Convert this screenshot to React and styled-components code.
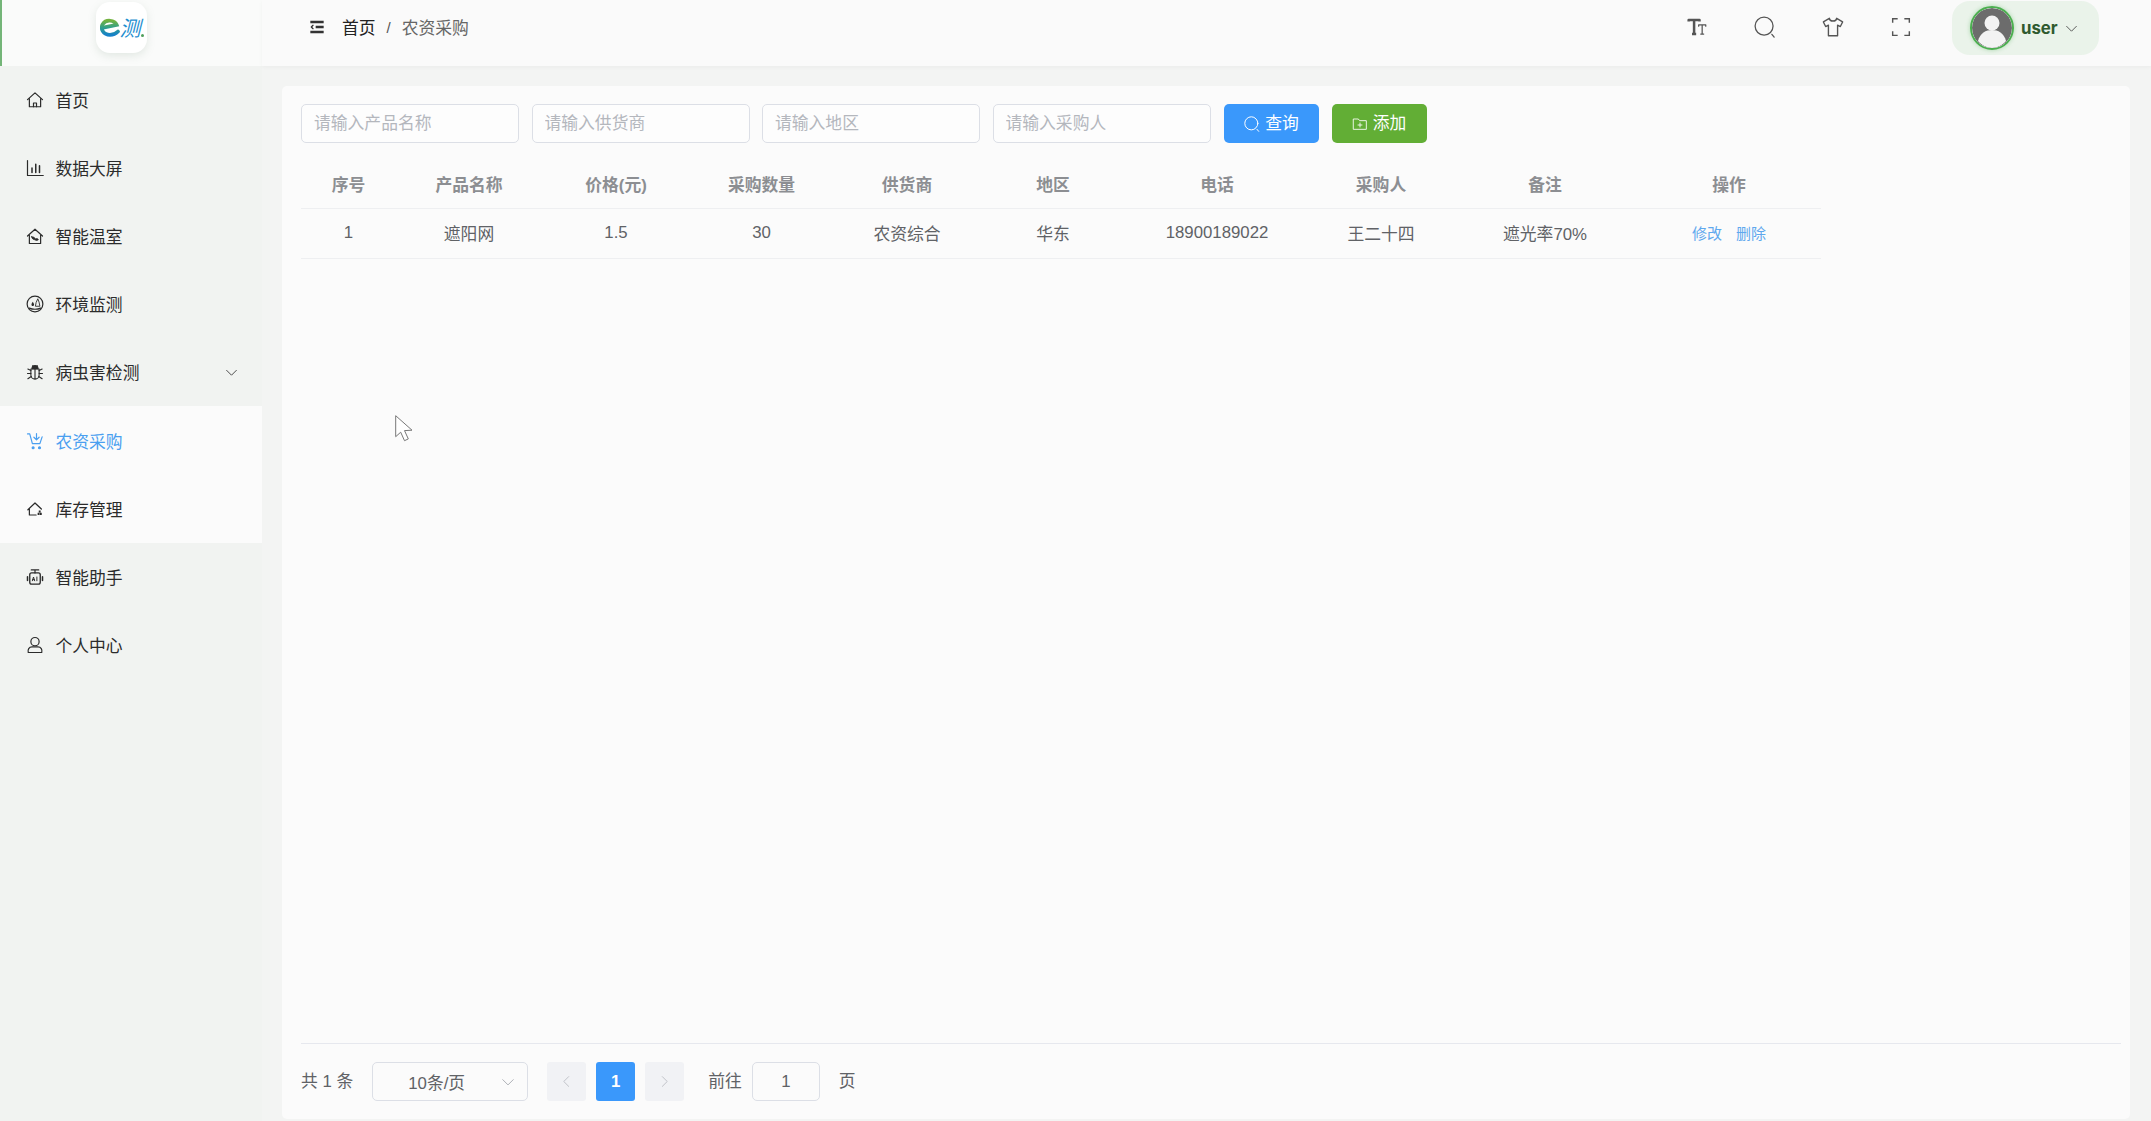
import React from 'react';
import styled, { createGlobalStyle } from 'styled-components';

const FONT = '"Liberation Sans", "Noto Sans CJK SC", sans-serif';

const GlobalStyle = createGlobalStyle`
  html, body {
    margin: 0;
    padding: 0;
    height: 100%;
    background: #f3f4f3;
    font-family: ${FONT};
    overflow: hidden;
  }
  #root { height: 100%; }
  * { box-sizing: border-box; }
`;

// icons, all drawn on a 24 box
const Svg = ({ size = 18, children, color = 'currentColor', width = 1.6 }) => (
  <svg width={size} height={size} viewBox="0 0 24 24" fill="none" stroke={color} strokeWidth={width} strokeLinecap="round" strokeLinejoin="round">
    {children}
  </svg>
);

const HomeIcon = () => (
  <Svg>
    <path d="M2 11.5 12 2.5l10 9M4.5 10v11h15V10" />
    <path d="M10 21v-5h4v5" />
  </Svg>
);
const ChartIcon = () => (
  <Svg>
    <path d="M2 2v20h21" />
    <path d="M8 12v6M13 7v11M18 9v9" strokeWidth="2" />
  </Svg>
);
const GreenhouseIcon = () => (
  <Svg>
    <path d="M2 12 12 3l10 9M4.500 10.500V22h15V10.500" />
    <path d="M7.500 13c3 0 4 1 5 3 2-1 3.500-.5 4 1-2 1.500-3.500 1-4.500 0-2 0-4-1-4.500-4z" fill="currentColor" strokeWidth="1" />
  </Svg>
);
const EnvIcon = () => (
  <Svg>
    <circle cx="12" cy="12" r="10.500" />
    <path d="M4.500 17.500c4 2 11 2 15 0" />
    <path d="M9 9c-1.500 2.500-2.500 4-1 5.500 1.500 1 3-.5 2.700-2.200-.2-1.100-1-2.200-1.700-3.300z" fill="currentColor" stroke="none" />
    <path d="M15.500 5.500 13.500 10l-1 5h6l-1-5z" stroke="currentColor" strokeWidth="1.200" />
  </Svg>
);
const BugIcon = () => (
  <Svg width="1.500">
    <path d="M8 7.500a4 4 0 0 1 8 0z" fill="currentColor" />
    <path d="M6.500 8h11v8a5.500 5.500 0 0 1-11 0zM12 8v13" />
    <path d="M9 3.500 10 5M15 3.500 14 5M2.500 8l4 2M21.500 8l-4 2M2 14h4.500M22 14h-4.500M2.500 21l4.500-3M21.500 21 17 18" />
  </Svg>
);
const CartIcon = () => (
  <Svg color="#4a9ff0">
    <path d="M2 2.500h3l3.500 13h10l3-9" />
    <path d="M14 2v8M10.500 7l3.500 3.500L17.500 7" />
    <circle cx="9.500" cy="21" r="1.300" fill="#4a9ff0" />
    <circle cx="18" cy="21" r="1.300" fill="#4a9ff0" />
  </Svg>
);
const StoreIcon = () => (
  <Svg>
    <path d="M2.500 13 12 4l8.500 8M4.500 12v8h9" />
    <path d="M15.500 17h2.500v3h-2.500zM18.500 17H21v3h-2.500zM17 14h2.500v2.500H17z" fill="currentColor" stroke="none" />
  </Svg>
);
const RobotIcon = () => (
  <Svg>
    <path d="M7 2.500h10M12 2.500v4" />
    <rect x="5" y="6.500" width="14" height="15" rx="2.500" strokeWidth="1.800" />
    <path d="M2 11.500v5M22 11.500v5" strokeWidth="2" />
    <path d="M8.500 17l1.500-5 1.500 5M9 15.500h2M14.500 12v5" strokeWidth="1.300" />
  </Svg>
);
const UserIcon = () => (
  <Svg>
    <circle cx="12" cy="7.500" r="5.500" />
    <path d="M3 22c-1-4 1-7.500 5-7.500h8c4 0 6 3.500 5 7.500z" />
  </Svg>
);
const Chevron = ({ size = 14, dir = 'down', color = 'currentColor' }) => {
  const paths = {
    down: 'M3 8l9 9 9-9',
    left: 'M16 3l-9 9 9 9',
    right: 'M8 3l9 9-9 9',
  };
  return (
    <Svg size={size} color={color} width={1.6}>
      <path d={paths[dir]} />
    </Svg>
  );
};
const FoldIcon = () => (
  <Svg size={16} color="#333" width={3.400}>
    <path d="M2 4.500h20M10 12h12M2 19.500h20" strokeLinecap="butt" />
    <path d="M6 9.500 3.500 12 6 14.500" strokeWidth="2" />
  </Svg>
);
const FontIcon = () => (
  <Svg size={20} color="#555" width={2.200}>
    <path d="M2 5.500V3.500h13v2M8.500 3.500V20M6 20.500h5" strokeWidth="3" strokeLinecap="butt" />
    <path d="M14 11V9.500h8.500V11M18.200 9.500V20.500M16.500 20.500h3.500" strokeWidth="1.500" />
  </Svg>
);
const SearchIcon = ({ size = 22, color = '#555', width = 1.400 }) => (
  <Svg size={size} color={color} width={width}>
    <circle cx="11" cy="11" r="9.800" />
    <path d="M19.500 20 22 23" />
  </Svg>
);
const ShirtIcon = () => (
  <Svg size={22} color="#555" width={1.500}>
    <path d="M8 2.500 1.500 6.500 4 11.500l3-1.500v11.500h10V10l3 1.500 2.500-5L16 2.500c-.5 4-7.500 4-8 0z" />
  </Svg>
);
const FullIcon = () => (
  <Svg size={20} color="#555" width={1.700}>
    <path d="M2 7V2h6M16 2h6v5M2 17v5h6M16 22h6v-5" strokeLinecap="butt" strokeLinejoin="miter" />
  </Svg>
);
const FolderIcon = () => (
  <Svg size={16} color="#fff" width={1.300}>
    <path d="M2.500 4.500h7l2 2.500h10v13h-19z" />
    <path d="M12 10.500v6M9 13.500h6" />
  </Svg>
);

const LogoMark = () => (
  <svg width="20" height="19" viewBox="0 0 30 28" fill="none">
    <defs>
      <linearGradient id="logoE" x1="0" y1="0" x2="0" y2="1">
        <stop offset="0" stopColor="#72b23f" />
        <stop offset="0.5" stopColor="#2f9f8c" />
        <stop offset="1" stopColor="#1681c9" />
      </linearGradient>
    </defs>
    <path d="M3 14.500 25 10C22 3 9 1 4 9c-4 7 1 16 11 16 5 0 9-2 12-5" stroke="url(#logoE)" strokeWidth="5.500" strokeLinecap="round" />
  </svg>
);

const AvatarDrawing = () => (
  <svg width="40" height="40" viewBox="0 0 40 40">
    <circle cx="20" cy="20" r="20" fill="#6c6c6c" />
    <circle cx="20" cy="15" r="7.500" fill="#f3f3f3" />
    <path d="M6 33c2-8 8-11 14-11s12 3 14 11c-3.500 4-8.500 7-14 7S9.500 37 6 33z" fill="#f3f3f3" />
  </svg>
);

const Page = styled.div`
  height: 1121px;
  width: 2151px;
  display: grid;
  grid-template-columns: 262px 1fr;
  grid-template-rows: 66px 1fr;
  position: relative;
  background: #f3f4f3;
`;

const LogoCell = styled.div`
  background: #fafbfa;
  border-left: 2px solid #74b578;
  display: flex;
  align-items: flex-start;
  padding: 2px 0 0 94px;
`;

const LogoTile = styled.div`
  width: 51px;
  height: 51px;
  border-radius: 14px;
  background: #fff;
  box-shadow: 0 3px 8px rgba(120, 150, 130, 0.18);
  display: flex;
  align-items: center;
  justify-content: center;
`;

const LogoText = styled.span`
  font-family: "Noto Sans CJK SC", sans-serif;
  font-style: italic;
  font-size: 21px;
  line-height: 1;
  color: #1f8fd0;
`;

const LogoDot = styled.span`
  width: 3px;
  height: 3px;
  border-radius: 50%;
  background: #4f9f5b;
  align-self: flex-end;
  margin: 0 0 16px 0;
`;

const Header = styled.header`
  background: #fafafa;
  display: flex;
  align-items: center;
  padding: 0 52px 12px 47px;
  box-shadow: 0 1px 4px rgba(0, 0, 0, 0.04);
  position: relative;
`;

const Crumbs = styled.div`
  display: flex;
  align-items: center;
  font-size: 16.800px;
  margin-left: 17px;
`;

const CrumbLink = styled.span`
  color: #222;
`;

const CrumbSep = styled.span`
  color: #555;
  margin: 0 11px;
  font-size: 15px;
`;

const CrumbNow = styled.span`
  color: #666;
`;

const Tools = styled.div`
  margin-left: auto;
  display: flex;
  align-items: center;
`;

const ToolButton = styled.div`
  width: 68px;
  display: flex;
  justify-content: center;
  align-items: center;
`;

const UserPill = styled.div`
  width: 147px;
  height: 54px;
  margin: 2px 0 0 17px;
  border-radius: 18px;
  background: #eaf3ea;
  display: flex;
  align-items: center;
  padding-left: 18px;
  color: #2f5a2f;
  font-weight: 700;
  font-size: 16.800px;
  font-family: "Inter", ${FONT};
`;

const Avatar = styled.div`
  width: 44px;
  height: 44px;
  border-radius: 50%;
  border: 2px solid #4caf50;
  box-shadow: 0 0 4px rgba(76, 175, 80, 0.4);
  overflow: hidden;
  margin-right: 7px;
  flex: none;
  display: flex;
`;

const UserCaret = styled.span`
  display: flex;
  margin-left: 7px;
  color: #444;
`;

const Sidebar = styled.nav`
  background: #f1f3f1;
`;

const MenuItem = styled.div`
  height: 68.100px;
  display: flex;
  align-items: center;
  padding: 0 24px 0 26px;
  font-size: 16.800px;
  color: ${(p) => (p.$active ? '#4a9ff0' : '#2b2b2b')};
  background: ${(p) => (p.$light ? '#fbfbfb' : 'transparent')};
`;

const MenuIcon = styled.span`
  width: 18px;
  height: 18px;
  display: flex;
  margin-right: 11.500px;
  flex: none;
`;

const MenuCaret = styled.span`
  display: flex;
  margin-left: auto;
  color: #333;
`;

const Main = styled.main`
  padding: 20px 21px 2px 20px;
  display: flex;
  min-height: 0;
`;

const Card = styled.section`
  flex: 1;
  background: #fbfbfb;
  border-radius: 5px;
  padding: 18px 9px 0 19px;
  display: flex;
  flex-direction: column;
`;

const Filters = styled.div`
  display: flex;
  gap: 12.500px;
  height: 39px;
`;

const FilterInput = styled.input`
  width: 218px;
  height: 39px;
  border: 1px solid #dcdfe6;
  border-radius: 5px;
  background: #fdfdfd;
  padding: 0 12px;
  font-size: 16.800px;
  font-family: ${FONT};
  outline: none;
  &::placeholder { color: #b4b7bd; opacity: 1; }
`;

const Button = styled.button`
  height: 39px;
  width: ${(p) => p.$w}px;
  border: none;
  border-radius: 5px;
  background: ${(p) => p.$bg};
  color: #fff;
  font-size: 16.800px;
  line-height: 1;
  font-family: ${FONT};
  display: flex;
  align-items: center;
  justify-content: center;
  gap: 5px;
  padding: 1px 0 0;
`;

const SearchButton = styled(Button)`
  margin-left: 1px;
`;

const Table = styled.table`
  width: 1520px;
  margin-top: 6px;
  border-collapse: collapse;
  table-layout: fixed;
  font-size: 16.800px;
`;

const Th = styled.th`
  height: 59px;
  padding: 11px 0 0;
  font-weight: 700;
  color: #8c8e92;
  text-align: center;
  border-bottom: 1px solid #eeeff1;
`;

const Td = styled.td`
  height: 50px;
  padding: 0;
  color: #606266;
  text-align: center;
  border-bottom: 1px solid #eeeff1;
`;

const ActionLink = styled.a`
  color: #5fa8ee;
  font-size: 15px;
  margin-right: ${(p) => (p.$gap ? '14px' : '0')};
`;

const Pager = styled.footer`
  margin: auto 0 0;
  height: 76px;
  border-top: 1px solid #e6e8ee;
  display: flex;
  align-items: flex-start;
  padding-top: 18px;
  font-size: 16.800px;
  color: #606266;
`;

const PagerText = styled.span`
  line-height: 39px;
  margin-right: ${(p) => p.$mr || 0}px;
  margin-left: ${(p) => p.$ml || 0}px;
`;

const PagerSelect = styled.div`
  width: 156px;
  height: 39px;
  border: 1px solid #dcdfe6;
  border-radius: 5px;
  display: flex;
  align-items: center;
  padding: 0 12px 0 35px;
  margin-right: 19px;
  color: #606266;
`;

const SelectCaret = styled.span`
  display: flex;
  margin-left: auto;
`;

const PageButton = styled.div`
  width: 39px;
  height: 39px;
  border-radius: 3px;
  margin-right: 10px;
  display: flex;
  align-items: center;
  justify-content: center;
  background: ${(p) => (p.$on ? '#3a98fb' : '#f1f2f5')};
  color: ${(p) => (p.$on ? '#fff' : '#b0b3b8')};
  font-weight: 700;
`;

const JumpInput = styled.div`
  width: 68px;
  height: 39px;
  border: 1px solid #dcdfe6;
  border-radius: 5px;
  margin: 0 19px 0 10px;
  display: flex;
  align-items: center;
  justify-content: center;
`;

const Pointer = styled.svg`
  position: absolute;
  left: 395px;
  top: 415px;
`;

const menu = [
  { label: '首页', icon: <HomeIcon /> },
  { label: '数据大屏', icon: <ChartIcon /> },
  { label: '智能温室', icon: <GreenhouseIcon /> },
  { label: '环境监测', icon: <EnvIcon /> },
  { label: '病虫害检测', icon: <BugIcon />, caret: true },
  { label: '农资采购', icon: <CartIcon />, active: true, light: true },
  { label: '库存管理', icon: <StoreIcon />, light: true },
  { label: '智能助手', icon: <RobotIcon /> },
  { label: '个人中心', icon: <UserIcon /> },
];

const columns = [
  { title: '序号', width: 95, value: '1' },
  { title: '产品名称', width: 146, value: '遮阳网' },
  { title: '价格(元)', width: 148, value: '1.5' },
  { title: '采购数量', width: 143, value: '30' },
  { title: '供货商', width: 148, value: '农资综合' },
  { title: '地区', width: 144, value: '华东' },
  { title: '电话', width: 184, value: '18900189022' },
  { title: '采购人', width: 144, value: '王二十四' },
  { title: '备注', width: 184, value: '遮光率70%' },
  { title: '操作', width: 184 },
];

const App = () => (
  <>
    <GlobalStyle />
    <Page>
      <LogoCell>
        <LogoTile>
          <LogoMark />
          <LogoText>测</LogoText>
          <LogoDot />
        </LogoTile>
      </LogoCell>
      <Header>
        <FoldIcon />
        <Crumbs>
          <CrumbLink>首页</CrumbLink>
          <CrumbSep>/</CrumbSep>
          <CrumbNow>农资采购</CrumbNow>
        </Crumbs>
        <Tools>
          <ToolButton><FontIcon /></ToolButton>
          <ToolButton><SearchIcon /></ToolButton>
          <ToolButton><ShirtIcon /></ToolButton>
          <ToolButton><FullIcon /></ToolButton>
          <UserPill>
            <Avatar><AvatarDrawing /></Avatar>
            user
            <UserCaret><Chevron size={13} /></UserCaret>
          </UserPill>
        </Tools>
      </Header>
      <Sidebar>
        {menu.map((item) => (
          <MenuItem key={item.label} $active={item.active} $light={item.light}>
            <MenuIcon>{item.icon}</MenuIcon>
            {item.label}
            {item.caret && <MenuCaret><Chevron size={13} /></MenuCaret>}
          </MenuItem>
        ))}
      </Sidebar>
      <Main>
        <Card>
          <Filters>
            <FilterInput placeholder="请输入产品名称" />
            <FilterInput placeholder="请输入供货商" />
            <FilterInput placeholder="请输入地区" />
            <FilterInput placeholder="请输入采购人" />
            <SearchButton $bg="#3a98fb" $w={95}><SearchIcon size={16} color="#fff" width={1.500} />查询</SearchButton>
            <Button $bg="#62ae35" $w={95}><FolderIcon />添加</Button>
          </Filters>
          <Table>
            <colgroup>
              {columns.map((col) => <col key={col.title} width={col.width} />)}
            </colgroup>
            <thead>
              <tr>
                {columns.map((col) => <Th key={col.title}>{col.title}</Th>)}
              </tr>
            </thead>
            <tbody>
              <tr>
                {columns.map((col) => (
                  <Td key={col.title}>
                    {col.value || (
                      <>
                        <ActionLink $gap>修改</ActionLink>
                        <ActionLink>删除</ActionLink>
                      </>
                    )}
                  </Td>
                ))}
              </tr>
            </tbody>
          </Table>
          <Pager>
            <PagerText $mr={19}>共 1 条</PagerText>
            <PagerSelect>
              10条/页
              <SelectCaret><Chevron size={14} color="#a8abb2" /></SelectCaret>
            </PagerSelect>
            <PageButton><Chevron size={13} dir="left" color="#b8bbc0" /></PageButton>
            <PageButton $on>1</PageButton>
            <PageButton><Chevron size={13} dir="right" color="#b8bbc0" /></PageButton>
            <PagerText $ml={14}>前往</PagerText>
            <JumpInput>1</JumpInput>
            <PagerText>页</PagerText>
          </Pager>
        </Card>
      </Main>
      <Pointer width="18" height="27" viewBox="0 0 18 27">
        <path d="M.7.7v21l5-4.500 3.800 8.500 3.800-1.800-3.800-8.300 7.500-.4z" fill="#fff" stroke="#777" strokeWidth="1" />
      </Pointer>
    </Page>
  </>
);

export default App;
